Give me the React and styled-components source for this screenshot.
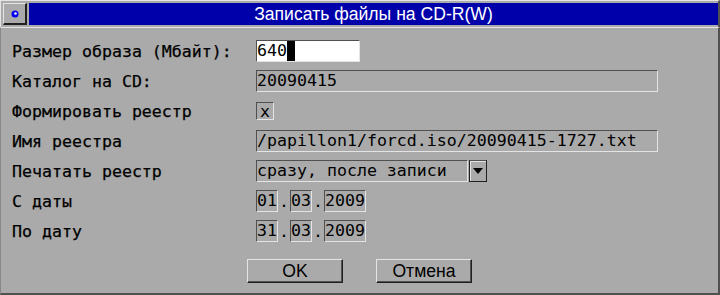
import React from "react";
import styled, { createGlobalStyle } from "styled-components";

const Global = createGlobalStyle`
  html, body { margin: 0; padding: 0; background: #aaaaaa; }
  #root { width: 720px; height: 295px; }
`;

const LIGHT = "#e4e4e4";
const DARK = "#505050";
const GREY = "#aaaaaa";
const MONO = `"DejaVu Sans Mono", "Liberation Mono", monospace`;
const SANS = `"Liberation Sans", Arial, sans-serif`;

const Window = styled.div`
  width: 720px;
  height: 295px;
  box-sizing: border-box;
  background: ${GREY};
  display: flex;
  flex-direction: column;
  overflow: hidden;
`;

const TitleRow = styled.div`
  height: 27px;
  box-sizing: border-box;
  border-top: 1px solid ${LIGHT};
  border-left: 1px solid ${LIGHT};
  border-right: 2px solid ${DARK};
  padding: 2px 0 1px 2px;
  display: flex;
  gap: 2px;
`;

const SysButton = styled.div`
  width: 24px;
  height: 22px;
  box-sizing: border-box;
  border-top: 1px solid ${LIGHT};
  border-left: 1px solid ${LIGHT};
  border-right: 2px solid #202020;
  border-bottom: 2px solid #202020;
  display: flex;
  align-items: center;
  justify-content: center;
`;

const TitleBar = styled.div`
  flex: 1;
  height: 22px;
  background: #0000aa;
  color: #ffffff;
  font-family: ${SANS};
  font-size: 17.6px;
  display: flex;
  align-items: center;
  justify-content: center;
`;

const Body = styled.div`
  flex: 1;
  box-sizing: border-box;
  border-top: 1px solid ${LIGHT};
  border-left: 1px solid #888888;
  border-right: 2px solid ${DARK};
  border-bottom: 2px solid ${DARK};
  padding: 8px 0 0 11px;
  display: flex;
  flex-direction: column;
`;

const Form = styled.div`
  display: grid;
  grid-template-columns: 244px 1fr;
  grid-auto-rows: 30px;
  align-items: center;
`;

const Label = styled.div`
  font-family: ${MONO};
  font-size: 16.6px;
  color: #000;
  white-space: nowrap;
  -webkit-text-stroke: 0.25px #000;
`;

const Cell = styled.div`
  display: flex;
  align-items: center;
  height: 30px;
`;

const Sunken = styled.div`
  box-sizing: border-box;
  height: 22px;
  width: ${(p) => p.$w}px;
  background: ${(p) => (p.$white ? "#ffffff" : GREY)};
  border-top: 1px solid ${DARK};
  border-left: 1px solid ${DARK};
  border-bottom: 1px solid ${LIGHT};
  border-right: 1px solid ${LIGHT};
  font-family: ${MONO};
  font-size: 16.6px;
  line-height: 20px;
  color: #000;
  white-space: nowrap;
  overflow: hidden;
  display: flex;
  align-items: center;
`;

const Cursor = styled.span`
  display: inline-block;
  width: 8px;
  height: 20px;
  background: #000;
`;

const Check = styled.div`
  box-sizing: border-box;
  width: 18px;
  height: 18px;
  border-top: 1px solid ${DARK};
  border-left: 1px solid ${DARK};
  border-bottom: 1px solid ${LIGHT};
  border-right: 1px solid ${LIGHT};
  font-family: ${MONO};
  font-size: 16.6px;
  line-height: 14px;
  display: flex;
  justify-content: center;
  align-items: flex-end;
`;

const ArrowButton = styled.div`
  box-sizing: border-box;
  width: 18px;
  height: 22px;
  margin-left: 1px;
  border: 1px solid #202020;
  border-top-color: ${DARK};
  box-shadow: inset 1px 1px 0 ${LIGHT};
  display: flex;
  align-items: center;
  justify-content: center;
`;

const Dot = styled.span`
  font-family: ${MONO};
  font-size: 16.6px;
  width: 12px;
  text-align: center;
`;

const Buttons = styled.div`
  margin-top: 13px;
  display: flex;
  justify-content: center;
  gap: 33px;
  padding-right: 11px;
`;

const Button = styled.div`
  box-sizing: border-box;
  width: 96px;
  height: 24px;
  border-top: 1px solid ${LIGHT};
  border-left: 1px solid ${LIGHT};
  border-right: 1px solid #202020;
  border-bottom: 1px solid #202020;
  box-shadow: inset -1px -1px 0 ${DARK};
  font-family: ${SANS};
  font-size: 17.6px;
  color: #000;
  display: flex;
  align-items: center;
  justify-content: center;
`;

export default function App() {
  return (
    <>
      <Global />
      <Window>
        <TitleRow>
          <SysButton>
            <svg width="8" height="8" viewBox="0 0 8 8">
              <circle cx="4" cy="4" r="3.5" fill="#0000ee" />
              <circle cx="4.5" cy="3.5" r="1.3" fill="#ffffff" />
            </svg>
          </SysButton>
          <TitleBar>Записать файлы на CD-R(W)</TitleBar>
        </TitleRow>
        <Body>
          <Form>
            <Label>Размер образа (Мбайт):</Label>
            <Cell>
              <Sunken $w={104} $white>
                640<Cursor />
              </Sunken>
            </Cell>

            <Label>Каталог на CD:</Label>
            <Cell>
              <Sunken $w={402}>20090415</Sunken>
            </Cell>

            <Label>Формировать реестр</Label>
            <Cell>
              <Check>x</Check>
            </Cell>

            <Label>Имя реестра</Label>
            <Cell>
              <Sunken $w={402}>/papillon1/forcd.iso/20090415-1727.txt</Sunken>
            </Cell>

            <Label>Печатать реестр</Label>
            <Cell>
              <Sunken $w={212}>сразу, после записи</Sunken>
              <ArrowButton>
                <svg width="10" height="6" viewBox="0 0 10 6">
                  <polygon points="0,0 10,0 5,6" fill="#000" />
                </svg>
              </ArrowButton>
            </Cell>

            <Label>С даты</Label>
            <Cell>
              <Sunken $w={22}>01</Sunken>
              <Dot>.</Dot>
              <Sunken $w={22}>03</Sunken>
              <Dot>.</Dot>
              <Sunken $w={42}>2009</Sunken>
            </Cell>

            <Label>По дату</Label>
            <Cell>
              <Sunken $w={22}>31</Sunken>
              <Dot>.</Dot>
              <Sunken $w={22}>03</Sunken>
              <Dot>.</Dot>
              <Sunken $w={42}>2009</Sunken>
            </Cell>
          </Form>
          <Buttons>
            <Button>OK</Button>
            <Button>Отмена</Button>
          </Buttons>
        </Body>
      </Window>
    </>
  );
}
